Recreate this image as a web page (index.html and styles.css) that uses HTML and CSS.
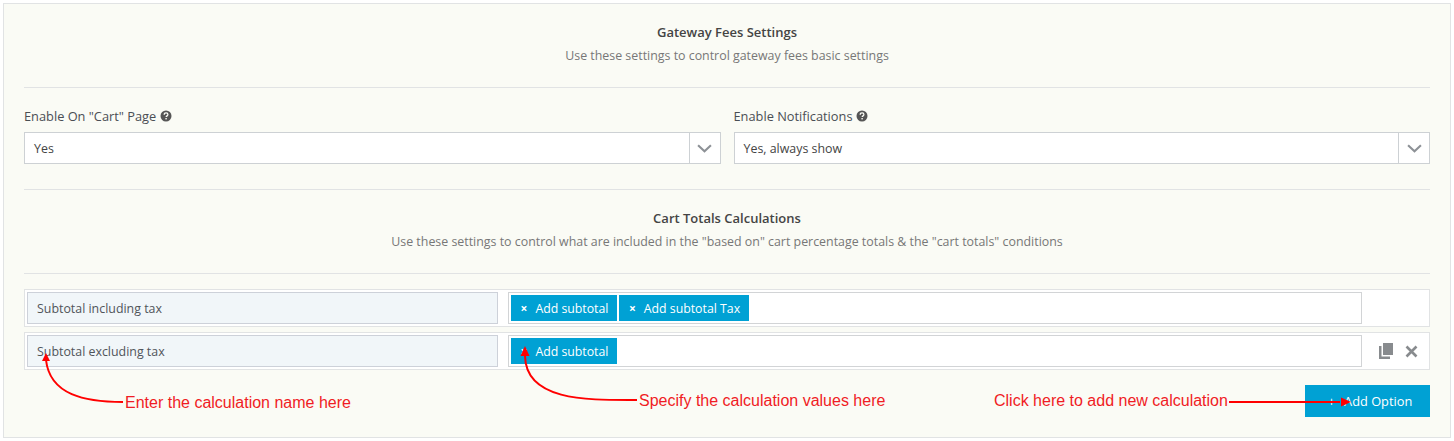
FILE: index.html
```html
<!DOCTYPE html>
<html lang="en">
<head>
<meta charset="utf-8">
<title>Gateway Fees Settings</title>
<link rel="stylesheet" href="styles.css">
</head>
<body>
<main class="panel">
  <header class="section-head first">
    <h2>Gateway Fees Settings</h2>
    <p>Use these settings to control gateway fees basic settings</p>
  </header>
  <section class="fields">
    <div class="field">
      <label>Enable On "Cart" Page <svg class="help" viewBox="0 0 12 12"><circle cx="6" cy="6" r="5.500" fill="#555"/><path d="M4.200 4.700c0-1.100.8-1.800 1.900-1.800s1.800.7 1.800 1.600c0 1.400-1.700 1.300-1.700 2.600" fill="none" stroke="#fbfcf6" stroke-width="1.300"/><rect x="5.400" y="8" width="1.400" height="1.400" fill="#fbfcf6"/></svg></label>
      <div class="select"><span class="value">Yes</span><span class="caret"><svg viewBox="0 0 14 8" width="15" height="9"><path d="M1 1l6 5.500L13 1" fill="none" stroke="#8d9196" stroke-width="2"/></svg></span></div>
    </div>
    <div class="field">
      <label>Enable Notifications <svg class="help" viewBox="0 0 12 12"><circle cx="6" cy="6" r="5.500" fill="#555"/><path d="M4.200 4.700c0-1.100.8-1.800 1.900-1.800s1.800.7 1.800 1.600c0 1.400-1.700 1.300-1.700 2.600" fill="none" stroke="#fbfcf6" stroke-width="1.300"/><rect x="5.400" y="8" width="1.400" height="1.400" fill="#fbfcf6"/></svg></label>
      <div class="select"><span class="value">Yes, always show</span><span class="caret"><svg viewBox="0 0 14 8" width="15" height="9"><path d="M1 1l6 5.500L13 1" fill="none" stroke="#8d9196" stroke-width="2"/></svg></span></div>
    </div>
  </section>
  <header class="section-head second">
    <h2>Cart Totals Calculations</h2>
    <p>Use these settings to control what are included in the "based on" cart percentage totals &amp; the "cart totals" conditions</p>
  </header>
  <section class="rows">
    <div class="row">
      <div class="name">Subtotal including tax</div>
      <div class="tags"><span class="tag"><i>×</i>Add subtotal</span><span class="tag"><i>×</i>Add subtotal Tax</span></div>
      <div class="actions"></div>
    </div>
    <div class="row">
      <div class="name">Subtotal excluding tax</div>
      <div class="tags"><span class="tag"><i>×</i>Add subtotal</span></div>
      <div class="actions">
        <svg viewBox="0 0 14 16" width="14" height="16"><path d="M4 0h10v12H4z" fill="#888b8e"/><path d="M0 3h2.500v10.500H11V16H0z" fill="#888b8e"/></svg>
        <svg viewBox="0 0 13 13" width="13" height="13"><path d="M1.500 1.500l10 10M11.500 1.500l-10 10" stroke="#888b8e" stroke-width="2.600" fill="none"/></svg>
      </div>
    </div>
  </section>
  <footer class="foot"><button class="add"><span class="plus">+</span>Add Option</button></footer>
  <div class="note note-a">Enter the calculation name here</div>
  <div class="note note-b">Specify the calculation values here</div>
  <div class="note note-c">Click here to add new calculation</div>
  <svg class="arrows" viewBox="0 0 1454 441" width="1454" height="441">
    <g fill="none" stroke="#f00" stroke-width="2">
      <path d="M123 402C85 402 50 395 46 360"/>
      <path d="M637 400C590 400 526 402 525 356"/>
      <path d="M1229 402H1340"/>
    </g>
    <g fill="#f00">
      <path d="M46 353l-4 8h8z"/>
      <path d="M525 346l-4.500 10h9z"/>
      <path d="M1351 402l-10-4.500v9z"/>
    </g>
  </svg>
</main>
</body>
</html>
```
FILE: styles.css
```css
* { box-sizing: border-box; }
html, body { margin: 0; padding: 0; }
body {
  width: 1454px;
  height: 441px;
  padding: 3px 3px 3px;
  font-family: "Open Sans", sans-serif;
  font-size: 12.4px;
  color: #555;
  background: #fff;
  overflow: hidden;
}
.panel {
  position: relative;
  height: 435px;
  padding: 0 20px;
  background: #fafbf5;
  border: 1px solid #e1e3e4;
}
.section-head { text-align: center; border-bottom: 1px solid #e1e3e4; }
.section-head.first { height: 84px; padding-top: 19px; }
.section-head.second { height: 85px; padding-top: 19px; margin-top: 25px; border-top: 1px solid #e1e3e4; }
.section-head h2 { margin: 0 0 6px; font-size: 13px; line-height: 18px; font-weight: 600; color: #444; }
.section-head p { margin: 0; font-size: 12.4px; line-height: 18px; color: #777; }
.fields { display: flex; gap: 13px; padding-top: 19px; }
.field { flex: 1 1 0; }
.field label { display: flex; align-items: center; gap: 4px; height: 18px; margin-bottom: 7px; font-size: 12.800px; font-weight: 400; color: #4a4e54; }
.help { width: 12px; height: 12px; }
.select { display: flex; height: 32px; background: #fff; border: 1px solid #cdd1d4; }
.value { flex: 1; padding-left: 9px; line-height: 32px; color: #444; }
.caret { width: 31px; display: flex; align-items: center; justify-content: center; border-left: 1px solid #cdd1d4; }
.rows { display: flex; flex-direction: column; gap: 5px; padding-top: 15px; }
.row { display: flex; align-items: center; height: 38px; padding: 0 2px; background: #fff; border: 1px solid #e1e3e4; }
.name { width: 471px; height: 32px; padding-left: 9px; line-height: 32px; background: #f1f6f9; border: 1px solid #cdd1d9; color: #50545a; }
.tags { display: flex; gap: 2px; align-items: center; width: 854px; height: 32px; margin-left: 10px; padding-left: 2px; background: #fff; border: 1px solid #d2d4d6; }
.tag { display: inline-flex; align-items: center; height: 26px; padding: 0 9px 0 9.500px; background: #00a1d4; color: #fff; font-size: 12.300px; }
.tag i { font-style: normal; font-weight: 700; margin-right: 8px; font-size: 12px; }
.actions { display: flex; flex: 1; align-items: center; justify-content: flex-end; gap: 12px; padding-right: 9px; }
.foot { display: flex; justify-content: flex-end; padding-top: 15px; }
.add { height: 32px; width: 125px; border: 0; padding: 0 0 0 5px; background: #00a1d4; color: #fff; font-family: inherit; font-size: 12.800px; }
.plus { margin-right: 9px; }
.note { position: absolute; font-family: "Liberation Sans", Arial, sans-serif; font-size: 16px; line-height: 18px; color: #f01c24; white-space: nowrap; }
.note-a { left: 121px; top: 390px; }
.note-b { left: 635px; top: 388px; }
.note-c { left: 990px; top: 388px; }
.arrows { position: absolute; left: -4px; top: -4px; pointer-events: none; }
```
